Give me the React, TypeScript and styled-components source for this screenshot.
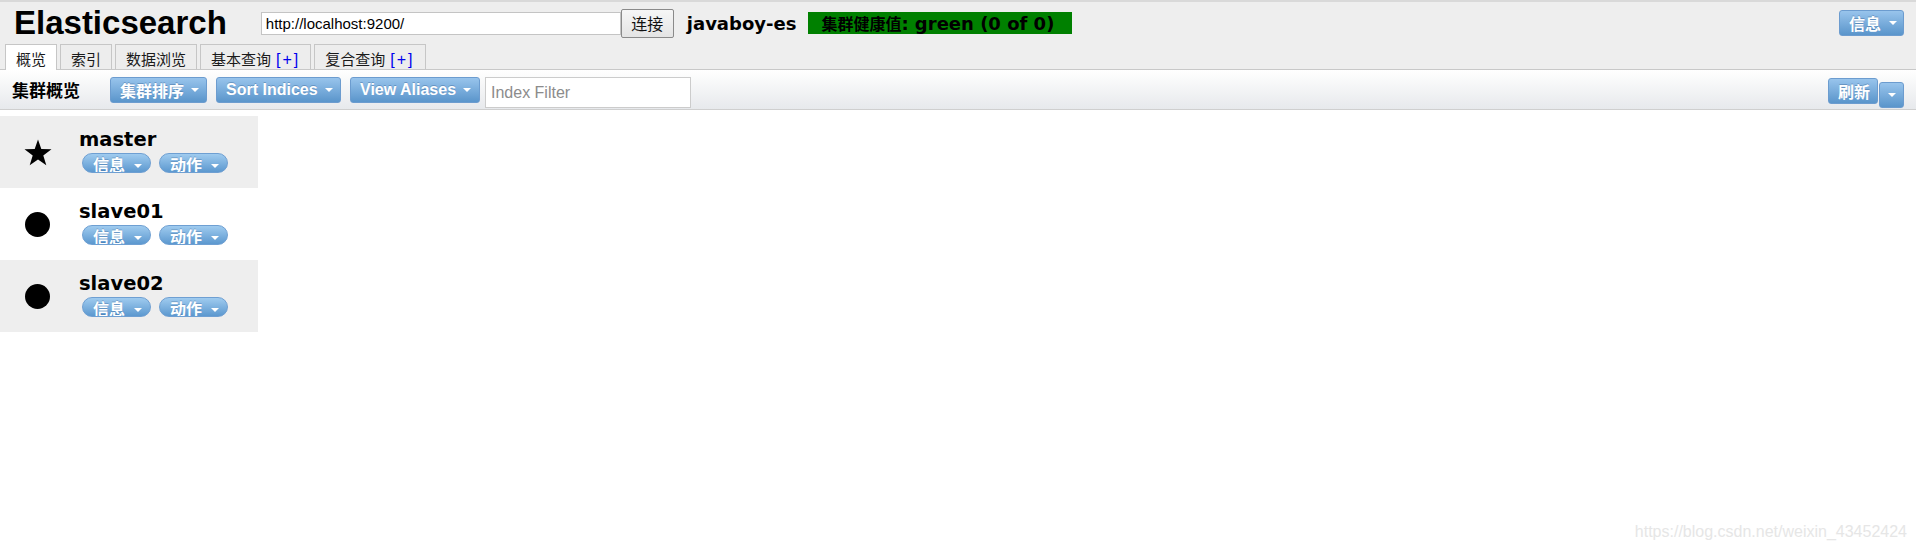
import React from "react"
import styled, { createGlobalStyle } from 'styled-components'

const GlobalStyle = createGlobalStyle`
  html, body {
    margin: 0;
    padding: 0;
    background: #fff;
    font-family: "Liberation Sans", "Noto Sans CJK SC", sans-serif;
  }
`;

const CJK = `"Noto Sans CJK SC", sans-serif`;
const VERDANA = `"DejaVu Sans", "Noto Sans CJK SC", sans-serif`;
const TAHOMA = `"Liberation Sans", "Noto Sans CJK SC", sans-serif`;

const Page = styled.div`
  position: relative;
  min-height: 551px;
`;

const Header = styled.div`
  background: #eeeeee;
  border-top: 2px solid #d9d9d9;
`;

const HeaderTop = styled.div`
  display: flex;
  align-items: center;
  height: 42px;
  padding: 0 12px 0 14px;
`;

const Title = styled.div`
  font-family: ${TAHOMA};
  font-weight: bold;
  font-size: 33px;
  line-height: 33px;
  color: #000;
  margin-top: -2px;
`;

const UrlInput = styled.input`
  box-sizing: border-box;
  margin-left: 34px;
  width: 360px;
  height: 23px;
  border: 1px solid #c4c4c4;
  padding: 0 4px;
  font-family: "Liberation Sans", sans-serif;
  font-size: 15px;
  color: #000;
  outline: none;
`;

const ConnectButton = styled.button`
  box-sizing: border-box;
  width: 53px;
  height: 29px;
  margin-left: 0;
  border: 1px solid #8a8a8a;
  border-radius: 2px;
  background: linear-gradient(#f6f6f6, #e4e4e4);
  font-family: ${CJK};
  font-size: 16px;
  padding: 0;
  color: #111;
`;

const ClusterName = styled.div`
  margin-left: 13px;
  font-family: ${VERDANA};
  font-weight: bold;
  font-size: 18px;
  color: #000;
`;

const Health = styled.div`
  box-sizing: border-box;
  margin-left: 12px;
  width: 264px;
  height: 22px;
  padding-left: 13px;
  background: #008000;
  color: #000;
  font-family: ${VERDANA};
  font-weight: bold;
  font-size: 18px;
  line-height: 22px;
  white-space: nowrap;
`;

const Cjk = styled.span`
  font-family: ${CJK};
  font-size: 16px;
`;

const Spacer = styled.div`
  flex: 1;
`;

const Button = styled.div<{ $w?: number; $pad?: number }>`
  box-sizing: border-box;
  display: flex;
  align-items: center;
  height: 26px;
  ${p => (p.$w ? `width: ${p.$w}px;` : '')}
  padding: 0 0 0 ${p => p.$pad ?? 9}px;
  border: 1px solid #6c9ccf;
  border-radius: 3px;
  background: linear-gradient(#98c4ec, #5a95cb);
  color: #fff;
  font-family: ${TAHOMA};
  font-weight: bold;
  font-size: 16px;
  text-shadow: 0 -1px 0 rgba(40, 80, 130, 0.35);
  white-space: nowrap;
  cursor: pointer;
`;

const Caret = styled.span<{ $ml?: number }>`
  width: 0;
  height: 0;
  margin-left: ${p => p.$ml ?? 7}px;
  border-left: 4px solid transparent;
  border-right: 4px solid transparent;
  border-top: 4px solid #fff;
`;

const Tabs = styled.div`
  display: flex;
  align-items: flex-end;
  gap: 3px;
  height: 25px;
  padding-left: 5px;
`;

const Tab = styled.div<{ $active?: boolean }>`
  box-sizing: border-box;
  height: ${p => (p.$active ? 26 : 25)}px;
  margin-bottom: ${p => (p.$active ? -1 : 0)}px;
  padding: 4px 10px 0;
  border: 1px solid #c6c6c6;
  border-bottom: none;
  background: ${p => (p.$active ? '#ffffff' : '#ededed')};
  font-family: ${CJK};
  font-size: 15px;
  line-height: 20px;
  color: #1a1a1a;
  position: relative;
  z-index: 1;
  white-space: nowrap;
`;

const Plus = styled.span`
  font-family: "Liberation Sans", sans-serif;
  font-size: 16px;
  letter-spacing: 2px;
  color: #0000ee;
  margin-left: 5px;
`;

const Toolbar = styled.div`
  display: flex;
  align-items: center;
  height: 39px;
  padding: 0 12px 0 12px;
  border-top: 1px solid #c8c8c8;
  border-bottom: 1px solid #cfcfcf;
  background: linear-gradient(#ffffff, #e7e9ec);
`;

const ToolbarTitle = styled.div`
  font-family: ${CJK};
  font-weight: bold;
  font-size: 17px;
  color: #000;
  margin-right: 30px;
`;

const ToolbarGroup = styled.div`
  display: flex;
  align-items: center;
  gap: 9px;
`;

const FilterInput = styled.input`
  box-sizing: border-box;
  width: 206px;
  height: 31px;
  margin-left: -4px;
  margin-top: 6px;
  border: 1px solid #cccccc;
  padding: 0 5px;
  font-family: "Liberation Sans", sans-serif;
  font-size: 16px;
  outline: none;
  &::placeholder {
    color: #8c8c8c;
  }
`;

const SplitButton = styled.div`
  display: flex;
  align-items: flex-start;
  height: 31px;
  padding-top: 4px;
  box-sizing: border-box;
`;

const SplitArrow = styled(Button)`
  width: 25px;
  margin-top: 4px;
  margin-left: 1px;
  padding: 0;
  justify-content: center;
`;

const NodeList = styled.div`
  margin-top: 6px;
  width: 258px;
`;

const NodeRow = styled.div<{ $shade: boolean }>`
  display: flex;
  height: 72px;
  background: ${p => (p.$shade ? '#eeeeee' : '#ffffff')};
`;

const IconCell = styled.div`
  width: 76px;
  display: flex;
  align-items: center;
  justify-content: center;
`;

const Dot = styled.div`
  width: 25px;
  height: 25px;
  border-radius: 50%;
  background: #000;
  margin-left: -1px;
`;

const NodeInfo = styled.div`
  display: flex;
  flex-direction: column;
  padding: 13px 0 0 3px;
`;

const NodeName = styled.div`
  font-family: ${VERDANA};
  font-weight: bold;
  font-size: 19.5px;
  line-height: 22px;
  color: #000;
`;

const PillRow = styled.div`
  display: flex;
  gap: 8px;
  margin: 2px 0 0 3px;
`;

const Pill = styled.div`
  box-sizing: border-box;
  display: flex;
  align-items: flex-start;
  width: 69px;
  height: 20px;
  padding: 2px 0 0 10px;
  overflow: hidden;
  border: 1px solid #6e9fd2;
  border-radius: 10px;
  background: linear-gradient(#9fcbef, #5c98cf);
  color: #fff;
  font-family: ${CJK};
  font-weight: bold;
  font-size: 16px;
  line-height: 16px;
  text-shadow: 0 -1px 0 rgba(40, 80, 130, 0.3);
`;

const PillCaret = styled(Caret)`
  margin-top: 8px;
  margin-left: 9px;
`;

const Watermark = styled.div`
  position: absolute;
  right: 9px;
  top: 523px;
  font-family: "Liberation Sans", sans-serif;
  font-size: 16px;
  line-height: 18px;
  color: #e6e6e6;
`;

const Star = () => (
  <svg width="28" height="27" viewBox="0 0 28 27">
    <polygon
      points="14,0.5 17.3,10 27.5,10.2 19.3,16.4 22.3,26.3 14,20.4 5.7,26.3 8.7,16.4 0.5,10.2 10.7,10"
      fill="#000"
    />
  </svg>
);

const nodes = [
  { name: 'master', master: true },
  { name: 'slave01', master: false },
  { name: 'slave02', master: false },
];

const tabs = [
  { label: '概览', active: true },
  { label: '索引' },
  { label: '数据浏览' },
  { label: '基本查询', plus: true },
  { label: '复合查询', plus: true },
];

const App = () => {
  return (
    <Page>
      <GlobalStyle />
      <Header>
        <HeaderTop>
          <Title>Elasticsearch</Title>
          <UrlInput defaultValue="http://localhost:9200/" />
          <ConnectButton>连接</ConnectButton>
          <ClusterName>javaboy-es</ClusterName>
          <Health>
            <Cjk>集群健康值</Cjk>: green (0 of 0)
          </Health>
          <Spacer />
          <Button $w={65}>
            信息<Caret $ml={8} />
          </Button>
        </HeaderTop>
        <Tabs>
          {tabs.map(t => (
            <Tab key={t.label} $active={t.active}>
              {t.label}
              {t.plus && <Plus>[+]</Plus>}
            </Tab>
          ))}
        </Tabs>
      </Header>
      <Toolbar>
        <ToolbarTitle>集群概览</ToolbarTitle>
        <ToolbarGroup>
          <Button $w={97}>
            集群排序<Caret />
          </Button>
          <Button $w={125}>
            Sort Indices<Caret />
          </Button>
          <Button $w={130}>
            View Aliases<Caret />
          </Button>
          <FilterInput placeholder="Index Filter" />
        </ToolbarGroup>
        <Spacer />
        <SplitButton>
          <Button $w={50}>刷新</Button>
          <SplitArrow>
            <Caret $ml={0} />
          </SplitArrow>
        </SplitButton>
      </Toolbar>
      <NodeList>
        {nodes.map((n, i) => (
          <NodeRow key={n.name} $shade={i % 2 === 0}>
            <IconCell>{n.master ? <Star /> : <Dot />}</IconCell>
            <NodeInfo>
              <NodeName>{n.name}</NodeName>
              <PillRow>
                <Pill>
                  信息<PillCaret />
                </Pill>
                <Pill>
                  动作<PillCaret />
                </Pill>
              </PillRow>
            </NodeInfo>
          </NodeRow>
        ))}
      </NodeList>
      <Watermark>https://blog.csdn.net/weixin_43452424</Watermark>
    </Page>
  )
}

export default App
